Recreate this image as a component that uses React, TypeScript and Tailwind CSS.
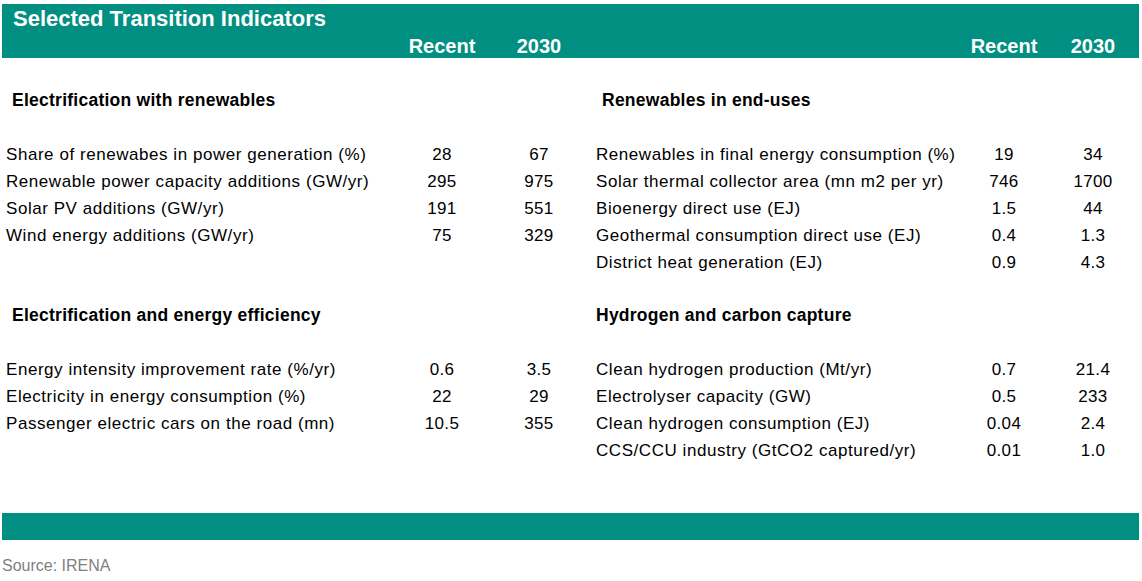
type Row = [string, string, string]

interface Section {
  title: string
  indent: boolean
  rows: Row[]
}

const leftSections: Section[] = [
  {
    title: 'Electrification with renewables',
    indent: true,
    rows: [
      ['Share of renewabes in power generation (%)', '28', '67'],
      ['Renewable power capacity additions (GW/yr)', '295', '975'],
      ['Solar PV additions (GW/yr)', '191', '551'],
      ['Wind energy additions (GW/yr)', '75', '329'],
    ],
  },
  {
    title: 'Electrification and energy efficiency',
    indent: true,
    rows: [
      ['Energy intensity improvement rate (%/yr)', '0.6', '3.5'],
      ['Electricity in energy consumption (%)', '22', '29'],
      ['Passenger electric cars on the road (mn)', '10.5', '355'],
    ],
  },
]

const rightSections: Section[] = [
  {
    title: 'Renewables in end-uses',
    indent: true,
    rows: [
      ['Renewables in final energy consumption (%)', '19', '34'],
      ['Solar thermal collector area (mn m2 per yr)', '746', '1700'],
      ['Bioenergy direct use (EJ)', '1.5', '44'],
      ['Geothermal consumption direct use (EJ)', '0.4', '1.3'],
      ['District heat generation (EJ)', '0.9', '4.3'],
    ],
  },
  {
    title: 'Hydrogen and carbon capture',
    indent: false,
    rows: [
      ['Clean hydrogen production (Mt/yr)', '0.7', '21.4'],
      ['Electrolyser capacity (GW)', '0.5', '233'],
      ['Clean hydrogen consumption (EJ)', '0.04', '2.4'],
      ['CCS/CCU industry (GtCO2 captured/yr)', '0.01', '1.0'],
    ],
  },
]

function SectionBlock({ section, cols, first }: { section: Section; cols: string; first: boolean }) {
  return (
    <div className={first ? 'h-[189px]' : 'mt-[26px]'}>
      <div className={`h-[27px] leading-[27px] text-[17.5px] tracking-[0.25px] font-bold text-black ${section.indent ? 'pl-[6px]' : ''}`}>
        {section.title}
      </div>
      <div className="h-[27px]" />
      {section.rows.map(([label, recent, target]) => (
        <div key={label} className={`grid ${cols} h-[27px] leading-[27px] text-[17px] text-black`}>
          <span className="whitespace-nowrap tracking-[0.55px]">{label}</span>
          <span className="text-center tracking-[0.3px]">{recent}</span>
          <span className="text-center tracking-[0.3px]">{target}</span>
        </div>
      ))}
    </div>
  )
}

export default function App() {
  const leftCols = 'grid-cols-[396px_80px_114px]'
  const rightCols = 'grid-cols-[368px_80px_98px]'

  return (
    <div className="w-[1142px] h-[581px] bg-white font-['Liberation_Sans',Arial,sans-serif] overflow-hidden">
      <div className="mt-[4px] ml-[2px] w-[1137px] h-[54px] bg-[#008f80] text-white font-bold flex flex-col">
        <div className="h-[30px] leading-[30px] pl-[11px] text-[22px]">Selected Transition Indicators</div>
        <div className="h-[24px] leading-[24px] text-[20px] flex pl-[4px]">
          <div className={`grid ${leftCols}`}>
            <span />
            <span className="text-center">Recent</span>
            <span className="text-center">2030</span>
          </div>
          <div className={`grid ${rightCols}`}>
            <span />
            <span className="text-center">Recent</span>
            <span className="text-center">2030</span>
          </div>
        </div>
      </div>

      <div className="mt-[29px] flex pl-[6px]">
        <div className="w-[591px]">
          {leftSections.map((s, i) => (
            <SectionBlock key={s.title} section={s} cols={leftCols} first={i === 0} />
          ))}
        </div>
        <div className="w-[546px]">
          {rightSections.map((s, i) => (
            <SectionBlock key={s.title} section={s} cols={rightCols} first={i === 0} />
          ))}
        </div>
      </div>

      <div className="mt-[49px] ml-[2px] w-[1137px] h-[27px] bg-[#008f80]" />
      <div className="mt-[16px] pl-[2px] h-[20px] leading-[20px] text-[16px] text-[#7f7f7f]">Source: IRENA</div>
    </div>
  )
}
